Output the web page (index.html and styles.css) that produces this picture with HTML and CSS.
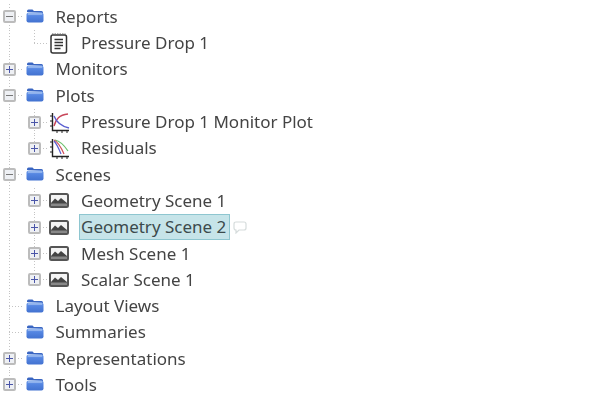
FILE: index.html
```html
<!DOCTYPE html>
<html>
<head>
  <title>Simulation tree</title>
  <link rel="stylesheet" href="styles.css">
</head>
<body>

<svg class="defs" width="0" height="0">
  <defs>
    <linearGradient id="folderFill" x1="0" y1="0" x2="0" y2="1">
      <stop offset="0" stop-color="#7ea6ea"/>
      <stop offset="0.35" stop-color="#5586e2"/>
      <stop offset="1" stop-color="#4272d0"/>
    </linearGradient>
    <symbol id="folder" viewBox="0 0 18 14">
      <path d="M1 3V2q0-1.500 1.500-1.500h4L8 2h7.500Q17 2 17 3.500V4Z" fill="#3a66c2"/>
      <rect x="0.500" y="3.500" width="17" height="10" rx="2" fill="url(#folderFill)"/>
      <path d="M2 5h14" stroke="#b6cef5" stroke-width="1"/>
    </symbol>
    <symbol id="report" viewBox="0 0 18 21">
      <rect x="1" y="2" width="15.500" height="18" rx="2" fill="#fff" stroke="#333" stroke-width="1.500"/>
      <path d="M2 1.500h13.500" stroke="#666" stroke-width="2" stroke-dasharray="1.500 1"/>
      <path d="M4.500 6.500h8.500M4.500 9.500h8.500M4.500 12.500h8.500M4.500 15.500h6" stroke="#333" stroke-width="1.300"/>
    </symbol>
    <symbol id="monitorPlot" viewBox="0 0 21 21">
      <path d="M3.500 1v17.500H20" fill="none" stroke="#222" stroke-width="1.400"/>
      <path d="M1 4h2.500M1 9h2.500M1 14h2.500M8 18.500V21M13 18.500V21M18 18.500V21" stroke="#222" stroke-width="1"/>
      <path d="M5 14C7 7 10 3 19 2" fill="none" stroke="#c8475a" stroke-width="1.400"/>
      <path d="M5 4c2 5 6 10 15 12" fill="none" stroke="#5a5fd0" stroke-width="1.400"/>
    </symbol>
    <symbol id="residuals" viewBox="0 0 21 21">
      <path d="M3.500 1v17.500H20" fill="none" stroke="#222" stroke-width="1.400"/>
      <path d="M1 4h2.500M1 9h2.500M1 14h2.500M8 18.500V21M13 18.500V21M18 18.500V21" stroke="#222" stroke-width="1"/>
      <path d="M6 2c5 1 9 5 13 11" fill="none" stroke="#6cc06c" stroke-width="1.200"/>
      <path d="M5 2c4 2 7 7 10 14" fill="none" stroke="#d0505a" stroke-width="1.200"/>
      <path d="M5 3c3 3 5 8 7 13" fill="none" stroke="#5a5fd0" stroke-width="1.200"/>
    </symbol>
    <symbol id="scene" viewBox="0 0 20 15">
      <rect x="1" y="1" width="18" height="13" rx="1.500" fill="#f4f4f4" stroke="#555" stroke-width="2"/>
      <path d="M2 10 6 5.500 9 8 12 5 18 10V13H2Z" fill="#444"/>
      <rect x="2" y="10.500" width="16" height="2.500" fill="#888"/>
    </symbol>
    <symbol id="comment" viewBox="0 0 14 13">
      <path d="M3 1h8q2 0 2 2v4q0 2-2 2H6L3 12V9Q1 9 1 7V3q0-2 2-2Z" fill="#fff" stroke="#d6dcdc" stroke-width="1.200"/>
    </symbol>
  </defs>
</svg>

<ul class="tree">
  <li class="row">
    <span class="twisty line"><span class="box minus"></span></span>
    <svg class="folder"><use href="#folder"/></svg>
    <span class="label">Reports</span>
  </li>
  <li class="row">
    <span class="guide"></span>
    <span class="twisty end"></span>
    <svg class="report"><use href="#report"/></svg>
    <span class="label child">Pressure Drop 1</span>
  </li>
  <li class="row">
    <span class="twisty line"><span class="box plus"></span></span>
    <svg class="folder"><use href="#folder"/></svg>
    <span class="label">Monitors</span>
  </li>
  <li class="row">
    <span class="twisty line"><span class="box minus"></span></span>
    <svg class="folder"><use href="#folder"/></svg>
    <span class="label">Plots</span>
  </li>
  <li class="row">
    <span class="guide"></span>
    <span class="twisty line"><span class="box plus"></span></span>
    <svg class="plot"><use href="#monitorPlot"/></svg>
    <span class="label child">Pressure Drop 1 Monitor Plot</span>
  </li>
  <li class="row">
    <span class="guide"></span>
    <span class="twisty end"><span class="box plus"></span></span>
    <svg class="plot"><use href="#residuals"/></svg>
    <span class="label child">Residuals</span>
  </li>
  <li class="row">
    <span class="twisty line"><span class="box minus"></span></span>
    <svg class="folder"><use href="#folder"/></svg>
    <span class="label">Scenes</span>
  </li>
  <li class="row">
    <span class="guide"></span>
    <span class="twisty line"><span class="box plus"></span></span>
    <svg class="scene"><use href="#scene"/></svg>
    <span class="label child">Geometry Scene 1</span>
  </li>
  <li class="row">
    <span class="guide"></span>
    <span class="twisty line"><span class="box plus"></span></span>
    <svg class="scene"><use href="#scene"/></svg>
    <span class="label child selected">Geometry Scene 2</span>
    <svg class="comment"><use href="#comment"/></svg>
  </li>
  <li class="row">
    <span class="guide"></span>
    <span class="twisty line"><span class="box plus"></span></span>
    <svg class="scene"><use href="#scene"/></svg>
    <span class="label child">Mesh Scene 1</span>
  </li>
  <li class="row">
    <span class="guide"></span>
    <span class="twisty end"><span class="box plus"></span></span>
    <svg class="scene"><use href="#scene"/></svg>
    <span class="label child">Scalar Scene 1</span>
  </li>
  <li class="row">
    <span class="twisty line"></span>
    <svg class="folder"><use href="#folder"/></svg>
    <span class="label">Layout Views</span>
  </li>
  <li class="row">
    <span class="twisty line"></span>
    <svg class="folder"><use href="#folder"/></svg>
    <span class="label">Summaries</span>
  </li>
  <li class="row">
    <span class="twisty line"><span class="box plus"></span></span>
    <svg class="folder"><use href="#folder"/></svg>
    <span class="label">Representations</span>
  </li>
  <li class="row">
    <span class="twisty end"><span class="box plus"></span></span>
    <svg class="folder"><use href="#folder"/></svg>
    <span class="label">Tools</span>
  </li>
</ul>

</body>
</html>
```

FILE: styles.css
```css
body {
  margin: 0;
  background-color: #fff;
  overflow: hidden;
}

.defs {
  display: block;
}

.tree {
  list-style: none;
  margin: 0;
  padding: 3.7px 0 0 0;
  color: #444;
  font-family: "Noto Sans", sans-serif;
  font-size: 17px;
  filter: blur(0.4px);
}

.row {
  display: flex;
  align-items: center;
  height: 26.3px;
}

/* dotted tree lines, drawn as backgrounds so the rows stay in flow */
.guide, .twisty {
  flex: none;
  align-self: stretch;
  display: flex;
  align-items: center;
}

.guide {
  width: 24.5px;
  background-image: repeating-linear-gradient(to bottom, #c4c4c4 0 1px, transparent 1px 3px);
  background-size: 1px 100%;
  background-position: 9px 0;
  background-repeat: no-repeat;
}

.twisty {
  width: 26px;
  padding-left: 3px;
  box-sizing: border-box;
  background-image:
    repeating-linear-gradient(to bottom, #c4c4c4 0 1px, transparent 1px 3px),
    repeating-linear-gradient(to right, #c4c4c4 0 1px, transparent 1px 3px);
  background-size: 1px 100%, 14px 1px;
  background-position: 9px 0, 9px 50%;
  background-repeat: no-repeat;
}

.twisty.end {
  background-size: 1px 50%, 14px 1px;
}

.box {
  position: relative;
  width: 13px;
  height: 13px;
  box-sizing: border-box;
  border: 2px solid #bcbcbc;
  border-radius: 2px;
  background-color: #eef0f4;
}

/* minus / plus strokes on the expander box */
.box::before, .plus::after {
  content: "";
  position: absolute;
  background-color: #4a55a8;
}

.box::before {
  left: 1px;
  top: 4px;
  width: 7px;
  height: 1px;
}

.minus::before {
  background-color: #777;
}

.plus::after {
  left: 4px;
  top: 1px;
  width: 1px;
  height: 7px;
}

.folder {
  flex: none;
  width: 18px;
  height: 14px;
  margin-top: -1px;
}

.report {
  flex: none;
  width: 18px;
  height: 21px;
  margin-left: -1px;
  margin-right: 3px;
}

.plot {
  flex: none;
  width: 21px;
  height: 21px;
  margin-left: -2px;
  margin-right: 1px;
}

.scene {
  flex: none;
  width: 20px;
  height: 15px;
  margin-left: -2px;
  margin-right: 2px;
}

.label {
  margin-left: 11.5px;
  line-height: 24px;
  white-space: nowrap;
}

.label.child {
  margin-left: 8.5px;
  padding: 0 2px;
}

.label.selected {
  margin-left: 8.5px;
  padding: 0 3px 0 1px;
  border: 1px solid #8ec6d0;
  background-color: #c6e4e9;
  color: #3c4a4c;
}

.comment {
  flex: none;
  width: 14px;
  height: 13px;
  margin-left: 3px;
}
```
